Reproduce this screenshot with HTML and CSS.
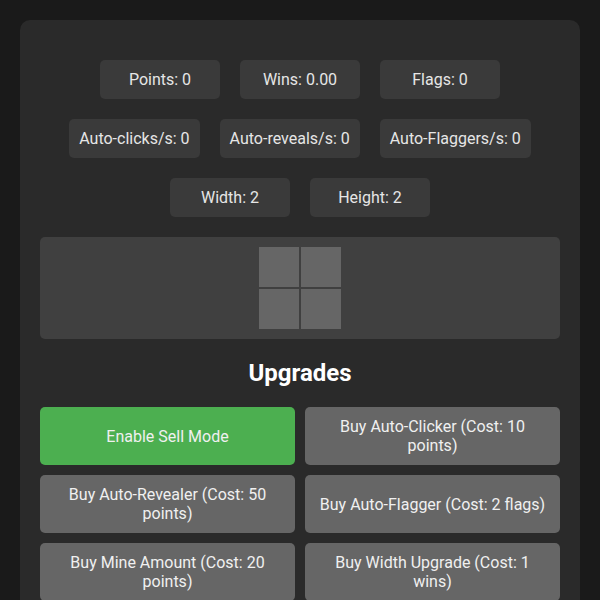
FILE: index.html
```html
<!DOCTYPE html>
<html>
<head>
<meta charset="utf-8">
<link rel="stylesheet" href="styles.css">
</head>
<body>
<div class="container">
  <div class="stats">
    <div class="stat-row">
      <div class="stat">Points: 0</div>
      <div class="stat">Wins: 0.00</div>
      <div class="stat">Flags: 0</div>
    </div>
    <div class="stat-row">
      <div class="stat">Auto-clicks/s: 0</div>
      <div class="stat">Auto-reveals/s: 0</div>
      <div class="stat">Auto-Flaggers/s: 0</div>
    </div>
    <div class="stat-row">
      <div class="stat">Width: 2</div>
      <div class="stat">Height: 2</div>
    </div>
  </div>
  <div class="board">
    <div class="grid">
      <div class="cell"></div>
      <div class="cell"></div>
      <div class="cell"></div>
      <div class="cell"></div>
    </div>
  </div>
  <h2 class="title">Upgrades</h2>
  <div class="upgrades">
    <button class="btn btn-green">Enable Sell Mode</button>
    <button class="btn">Buy Auto-Clicker (Cost: 10 points)</button>
    <button class="btn">Buy Auto-Revealer (Cost: 50 points)</button>
    <button class="btn">Buy Auto-Flagger (Cost: 2 flags)</button>
    <button class="btn">Buy Mine Amount (Cost: 20 points)</button>
    <button class="btn">Buy Width Upgrade (Cost: 1 wins)</button>
  </div>
</div>
</body>
</html>
```

FILE: styles.css
```css
html, body {
  margin: 0;
  padding: 0;
  background: #1a1a1a;
  font-family: Roboto, "Liberation Sans", sans-serif;
  color: #e6e6e6;
}

body {
  padding: 20px;
}

.container {
  background: #2a2a2a;
  border-radius: 10px;
  padding: 40px 20px 20px;
  min-height: 700px;
}

.stats {
  display: flex;
  flex-direction: column;
  gap: 20px;
}

.stat-row {
  display: flex;
  justify-content: center;
  gap: 20px;
}

.stat {
  background: #3a3a3a;
  border-radius: 5px;
  padding: 10px;
  min-width: 100px;
  text-align: center;
  font-size: 16px;
  line-height: 19px;
}

.board {
  margin-top: 20px;
  background: #404040;
  border-radius: 5px;
  padding: 10px;
  display: flex;
  justify-content: center;
}

.grid {
  display: grid;
  grid-template-columns: 40px 40px;
  grid-template-rows: 40px 40px;
  gap: 2px;
}

.cell {
  background: #666666;
}

.title {
  margin: 20px 0;
  text-align: center;
  font-size: 24px;
  line-height: 28px;
  font-weight: bold;
  color: #ffffff;
}

.upgrades {
  display: grid;
  grid-template-columns: 1fr 1fr;
  gap: 10px;
}

.btn {
  background: #666666;
  color: #f0f0f0;
  border: none;
  border-radius: 5px;
  padding: 10px;
  font-family: Roboto, "Liberation Sans", sans-serif;
  font-size: 16px;
  line-height: 19px;
}

.btn-green {
  background: #4caf50;
}
```
